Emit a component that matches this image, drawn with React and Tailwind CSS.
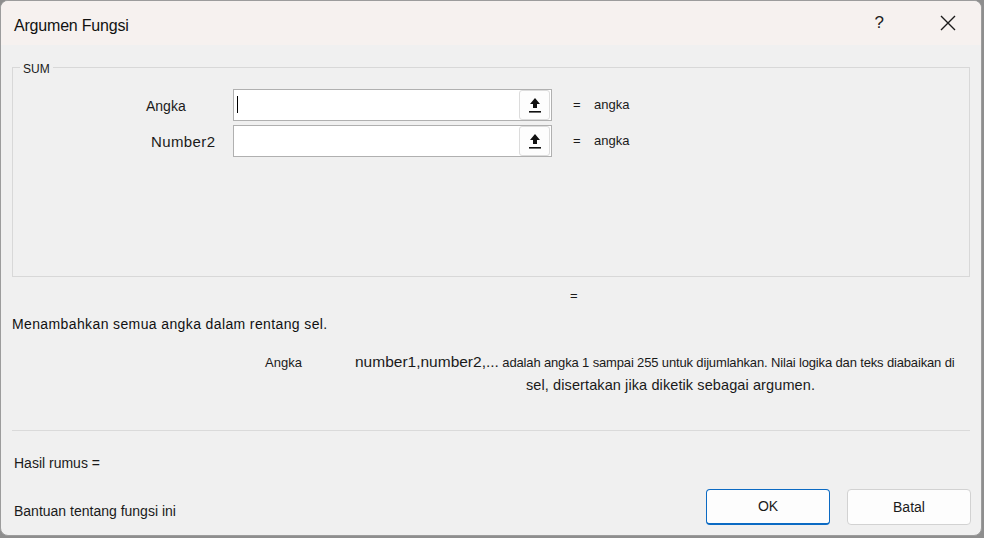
import React from "react";

const RefIcon = () => (
  <svg width="14" height="20" viewBox="0 0 14 20">
    <polygon points="7,3 12,9 9,9 9,13 5,13 5,9 2,9" fill="#111" />
    <rect x="1" y="16" width="12" height="1.6" fill="#111" />
  </svg>
);

const ArgRow = ({ label, labelPad, labelClass, caret }) => (
  <div className="flex items-center h-[31px]">
    <div className={`w-[220px] text-[#1a1a1a] pt-[3px] ${labelClass}`} style={{ paddingLeft: labelPad }}>
      {label}
    </div>
    <div className="w-[319px] h-[32px] bg-white border border-[#b0b0b0] flex items-center justify-between">
      <div className="pl-[3px] flex items-center">
        {caret && <div className="w-[1px] h-[17px] bg-black" />}
      </div>
      <button className="w-[31px] h-[30px] mr-[1px] rounded-[3px] border border-[#dcdcdc] bg-[#fdfdfd] flex items-center justify-center">
        <RefIcon />
      </button>
    </div>
    <div className="ml-[21px] w-[21px] text-[13px] text-[#1a1a1a]">=</div>
    <div className="text-[13px] text-[#1a1a1a]">angka</div>
  </div>
);

export default function App() {
  return (
    <div className="w-[984px] h-[538px] bg-[#8e8e8e] overflow-hidden" style={{ fontFamily: '"Liberation Sans", Arial, sans-serif' }}>
      <div className="w-[982px] h-[536px] rounded-[8px] border border-[#9c9c9c] bg-[#f0f0f0] overflow-hidden flex flex-col">
        {/* title bar */}
        <div className="h-[44px] bg-[#f6f1ef] flex items-center pl-[13px] pr-[24px] shrink-0">
          <div className="text-[16px] text-[#111] tracking-[-0.2px] pt-[6px]">Argumen Fungsi</div>
          <div className="ml-auto flex items-center">
            <span className="text-[17px] text-[#222] font-light">?</span>
            <svg className="ml-[55px]" width="18" height="18" viewBox="0 0 18 18">
              <path d="M2 2 L16 16 M16 2 L2 16" stroke="#1a1a1a" strokeWidth="1.4" />
            </svg>
          </div>
        </div>

        {/* body */}
        <div className="flex-1 flex flex-col px-[11px]">
          <div className="relative mt-[22px] h-[210px] border border-[#d8d8d8] pt-[21px]">
            <span className="absolute left-[7px] -top-[8px] px-[3px] bg-[#f0f0f0] text-[12px] text-[#1a1a1a]">SUM</span>
            <div className="flex flex-col gap-[5px]">
              <ArgRow label="Angka" labelPad={133} labelClass="text-[14px]" caret />
              <ArgRow label="Number2" labelPad={138} labelClass="text-[15px] tracking-[0.4px]" />
            </div>
          </div>

          <div className="h-[38px] flex items-center pl-[558px] text-[13px] text-[#1a1a1a]">=</div>

          <div className="text-[14px] text-[#111] tracking-[0.38px] leading-[18px]">
            Menambahkan semua angka dalam rentang sel.
          </div>

          <div className="flex mt-[19px]">
            <div className="w-[343px] pl-[253px] pt-[1px] text-[13px] text-[#1a1a1a]">Angka</div>
            <div className="w-[604px] text-[#1a1a1a]">
              <div className="leading-[20px] whitespace-nowrap">
                <span className="text-[15.5px]">number1,number2,...</span>
                <span className="text-[13px] tracking-[-0.15px]"> adalah angka 1 sampai 255 untuk dijumlahkan. Nilai logika dan teks diabaikan di</span>
              </div>
              <div className="pl-[171px] text-[14.5px] tracking-[0.1px] leading-[24px]">sel, disertakan jika diketik sebagai argumen.</div>
            </div>
          </div>

          <div className="mt-[33px] h-[1px] bg-[#dadada]" />

          <div className="mt-[22px] pl-[2px] text-[14px] text-[#1a1a1a]">Hasil rumus =</div>

          <div className="mt-[15px] flex items-center">
            <div className="pl-[2px] pt-[8px] text-[14px] text-[#1a1a1a]">Bantuan tentang fungsi ini</div>
            <div className="ml-auto flex gap-[17px] -mr-[1px]">
              <button className="w-[124px] h-[36px] rounded-[4px] bg-[#fdfdfd] border border-[#0b6ac3] border-b-2 text-[14px] text-[#1a1a1a]">
                OK
              </button>
              <button className="w-[124px] h-[36px] rounded-[4px] bg-[#fdfdfd] border border-[#d2d2d2] text-[14px] text-[#1a1a1a]">
                Batal
              </button>
            </div>
          </div>
        </div>
      </div>
    </div>
  );
}
